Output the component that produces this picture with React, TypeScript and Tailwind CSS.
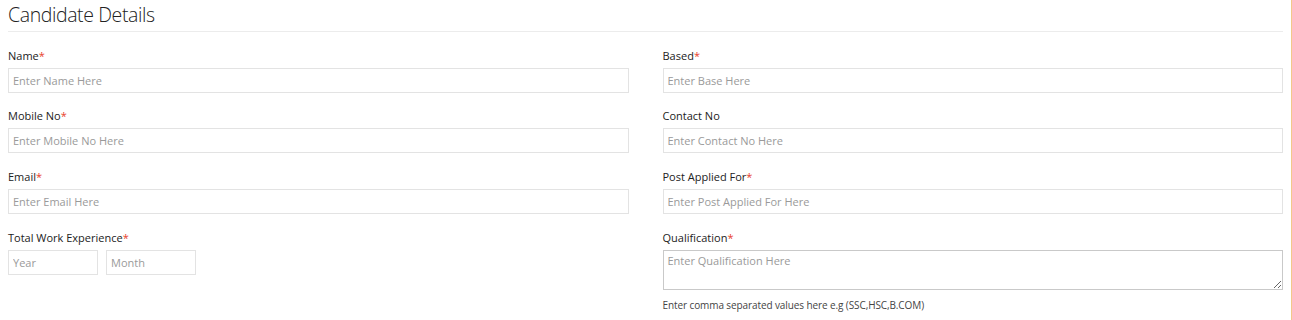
import type { ReactNode } from 'react';

const inputCls =
  'block w-full h-[25px] border border-[#e3e3e3] bg-white px-[4px] text-[11px] text-[#333] placeholder:text-[#9a9a9a] outline-none';

function Field({
  label,
  required,
  first,
  children,
}: {
  label: string;
  required?: boolean;
  first?: boolean;
  children: ReactNode;
}) {
  return (
    <div className={first ? 'mb-[12px]' : 'mb-[13px]'}>
      <div className="h-[20px] pt-[2px] leading-[18px] mb-[3px] text-[11px] text-[#222]">
        {label}
        {required && <span className="text-[#e8412c]">*</span>}
      </div>
      {children}
    </div>
  );
}

export default function App() {
  return (
    <div className="w-[1292px] h-[320px] bg-white border-r border-[#f3c889] font-['Open_Sans',sans-serif] overflow-hidden">
      <div className="px-[8px]">
        <h1 className="pt-[2px] h-[32px] text-[19.5px] leading-[26px] font-light tracking-[-0.4px] text-[#222] border-b border-[#ececec]">
          Candidate Details
        </h1>

        <div className="grid grid-cols-2 gap-x-[34px] pt-[13px]">
          {/* left column */}
          <div>
            <Field label="Name" required first>
              <input className={inputCls} placeholder="Enter Name Here" />
            </Field>
            <Field label="Mobile No" required>
              <input className={inputCls} placeholder="Enter Mobile No Here" />
            </Field>
            <Field label="Email" required>
              <input className={inputCls} placeholder="Enter Email Here" />
            </Field>
            <Field label="Total Work Experience" required>
              <div className="flex gap-[8px]">
                <input className={inputCls + ' !w-[90px]'} placeholder="Year" />
                <input className={inputCls + ' !w-[90px]'} placeholder="Month" />
              </div>
            </Field>
          </div>

          {/* right column */}
          <div>
            <Field label="Based" required first>
              <input className={inputCls} placeholder="Enter Base Here" />
            </Field>
            <Field label="Contact No">
              <input className={inputCls} placeholder="Enter Contact No Here" />
            </Field>
            <Field label="Post Applied For" required>
              <input className={inputCls} placeholder="Enter Post Applied For Here" />
            </Field>
            <Field label="Qualification" required>
              <textarea
                className="block w-full h-[40px] border border-[#c9c9c9] bg-white px-[4px] py-[3px] text-[11px] leading-[14px] text-[#333] placeholder:text-[#9a9a9a] outline-none"
                placeholder="Enter Qualification Here"
              />
              <p className="mt-[9px] text-[10px] leading-[13px] tracking-[-0.1px] text-[#444]">
                Enter comma separated values here e.g (SSC,HSC,B.COM)
              </p>
            </Field>
          </div>
        </div>
      </div>
    </div>
  );
}
